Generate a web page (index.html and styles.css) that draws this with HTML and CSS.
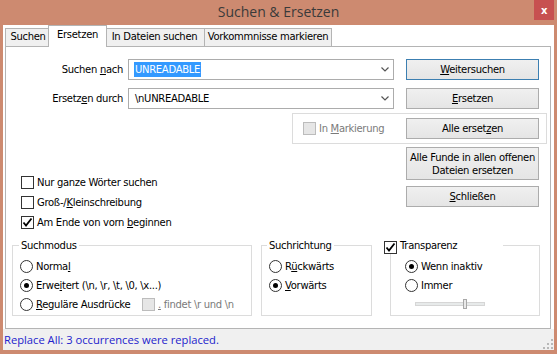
FILE: index.html
```html
<!DOCTYPE html>
<html lang="de">
<head>
    <meta charset="UTF-8">
    <title>Suchen &amp; Ersetzen</title>
    <link rel="stylesheet" href="styles.css">
</head>
<body>
    <div class="window">
        <div class="titlebar">
            <span class="title">Suchen &amp; Ersetzen</span>
            <span class="close">x</span>
        </div>
        <div class="client">
            <div class="tabs">
                <div class="tab tab-1">Suchen</div>
                <div class="tab tab-2 active">Ersetzen</div>
                <div class="tab tab-3">In Dateien suchen</div>
                <div class="tab tab-4">Vorkommnisse markieren</div>
            </div>
            <div class="panel">
                <div class="row row-find">
                    <label class="field-label">Suchen <u>n</u>ach</label>
                    <div class="combo">
                        <span class="sel">UNREADABLE</span>
                        <svg class="chevron" width="8" height="5" viewBox="0 0 8 5"><polyline points="0.5,0.5 4,4 7.5,0.5" fill="none" stroke="#555" stroke-width="1.2"/></svg>
                    </div>
                    <button class="btn default"><u>W</u>eitersuchen</button>
                </div>
                <div class="row row-replace">
                    <label class="field-label">Ersetz<u>e</u>n durch</label>
                    <div class="combo">
                        <span class="val">\nUNREADABLE</span>
                        <svg class="chevron" width="8" height="5" viewBox="0 0 8 5"><polyline points="0.5,0.5 4,4 7.5,0.5" fill="none" stroke="#555" stroke-width="1.2"/></svg>
                    </div>
                    <button class="btn"><u>E</u>rsetzen</button>
                </div>
                <div class="sel-group">
                    <span class="opt disabled in-sel"><span class="box"></span><span>In <u>M</u>arkierung</span></span>
                    <button class="btn">Alle erset<u>z</u>en</button>
                </div>
                <div class="row-mid">
                    <div class="checks">
                        <span class="opt"><span class="box"></span><span>Nur <u>g</u>anze Wörter suchen</span></span>
                        <span class="opt"><span class="box"></span><span>Groß-/<u>K</u>leinschreibung</span></span>
                        <span class="opt"><span class="box checked"><svg width="11" height="11" viewBox="0 0 11 11"><polyline points="1.5,5.5 4,8.5 9.5,1.5" fill="none" stroke="#000" stroke-width="1.8"/></svg></span><span>Am Ende von vorn <u>b</u>eginnen</span></span>
                    </div>
                    <div class="btn-col">
                        <button class="btn tall">Alle Funde in allen offenen<br>Dateien ersetzen</button>
                        <button class="btn"><u>S</u>chließen</button>
                    </div>
                </div>
                <div class="groups">
                    <fieldset class="group mode">
                        <legend>Suchmodus</legend>
                        <span class="opt"><span class="radio"></span><span>Norma<u>l</u></span></span>
                        <span class="opt"><span class="radio on"></span><span>Erwe<u>i</u>tert (\n, \r, \t, \0, \x...)</span></span>
                        <span class="opt"><span class="regex"><span class="radio"></span><span><u>R</u>eguläre Ausdrücke</span></span><span class="opt disabled"><span class="box"></span><span><u>.</u> findet \r und \n</span></span></span>
                    </fieldset>
                    <fieldset class="group dir">
                        <legend>Suchrichtung</legend>
                        <span class="opt"><span class="radio"></span><span>R<u>ü</u>ckwärts</span></span>
                        <span class="opt"><span class="radio on"></span><span><u>V</u>orwärts</span></span>
                    </fieldset>
                    <fieldset class="group trans">
                        <legend><span class="box checked"><svg width="11" height="11" viewBox="0 0 11 11"><polyline points="1.5,5.5 4,8.5 9.5,1.5" fill="none" stroke="#000" stroke-width="1.8"/></svg></span><span>Transparenz</span></legend>
                        <span class="opt"><span class="radio on"></span><span>Wenn inaktiv</span></span>
                        <span class="opt"><span class="radio"></span><span>Immer</span></span>
                        <div class="slider"><span class="thumb"></span></div>
                    </fieldset>
                </div>
            </div>
            <div class="statusbar">
                <span class="status-text">Replace All: 3 occurrences were replaced.</span>
                <svg class="grip" width="10" height="10" viewBox="0 0 10 10" fill="#b8b8b8">
                    <rect x="8" y="0" width="2" height="2"/>
                    <rect x="4" y="4" width="2" height="2"/><rect x="8" y="4" width="2" height="2"/>
                    <rect x="0" y="8" width="2" height="2"/><rect x="4" y="8" width="2" height="2"/><rect x="8" y="8" width="2" height="2"/>
                </svg>
            </div>
        </div>
    </div>
</body>
</html>
```

FILE: styles.css
```css
* {
    box-sizing: border-box;
}

body {
    margin: 0;
    font-family: 'DejaVu Sans', sans-serif;
    font-size: 10px;
    letter-spacing: -0.3px;
    color: #000;
}

u {
    text-decoration-thickness: 1px;
    text-underline-offset: 1px;
}

.window {
    width: 557px;
    height: 354px;
    background: #cd8a70;
    padding: 0 3px 4px;
    display: flex;
    flex-direction: column;
}

.titlebar {
    height: 25px;
    flex: none;
    display: grid;
    grid-template-columns: 1fr auto 1fr;
}

.title {
    grid-column: 2;
    font-family: 'Open Sans', sans-serif;
    font-size: 14px;
    letter-spacing: 0;
    color: #3a3a3a;
    line-height: 24px;
}

.close {
    grid-column: 3;
    justify-self: end;
    width: 20px;
    height: 20px;
    background: #c75050;
    color: #fff;
    font-weight: bold;
    font-size: 10px;
    display: flex;
    align-items: center;
    justify-content: center;
}

.client {
    flex: 1;
    background: #fff;
    display: flex;
    flex-direction: column;
}

/* tabs */
.tabs {
    height: 22px;
    flex: none;
    display: flex;
    align-items: flex-end;
    padding-left: 2px;
    margin-bottom: -1px;
}

.tab {
    height: 19px;
    border: 1px solid #b4b4b4;
    border-bottom: none;
    background: #f0f0f0;
    text-align: center;
    line-height: 16px;
    margin-left: -1px;
}

.tab-1 { width: 46px; margin-left: 0; }
.tab-2 { width: 55px; }
.tab-3 { width: 101px; }
.tab-4 { width: 128px; }

.tab.active {
    position: relative;
    z-index: 1;
    height: 22px;
    width: 59px;
    margin: 0 -2px 0 -3px;
    background: #fff;
    line-height: 17px;
}

.panel {
    height: 283px;
    flex: none;
    margin: 0 3px 0 2px;
    border: 1px solid #b4b4b4;
    background: #fff;
}

/* form rows */
.row {
    display: flex;
    align-items: center;
    height: 21px;
}

.row-find {
    margin-top: 12px;
}

.row-replace {
    margin-top: 8px;
}

.field-label {
    width: 117px;
    text-align: right;
}

.combo {
    margin-left: 5px;
    width: 266px;
    height: 21px;
    border: 1px solid #acacac;
    display: flex;
    align-items: center;
    padding: 0 4px 0 5px;
}

.sel {
    background: #3399ff;
    color: #fff;
    line-height: 15px;
    padding: 0 1px;
}

.val {
    padding-left: 1px;
}

.chevron {
    margin-left: auto;
}

.btn {
    font: inherit;
    letter-spacing: inherit;
    color: #000;
    width: 133px;
    height: 21px;
    padding: 0;
    border: 1px solid #acacac;
    background: linear-gradient(#f0f0f0, #e5e5e5);
    text-align: center;
    line-height: 13px;
}

.row .btn {
    margin-left: 12px;
}

.btn.default {
    border-color: #3c7fb1;
}

.btn.tall {
    height: 33px;
}

.sel-group {
    margin: 4px 0 0 286px;
    width: 255px;
    height: 31px;
    border: 1px solid #dcdcdc;
    display: flex;
    align-items: center;
    padding-left: 10px;
}

.in-sel {
    width: 103px;
}

/* checkboxes and radios */
.opt {
    display: flex;
    align-items: center;
    white-space: nowrap;
}

.box,
.radio {
    flex: none;
    width: 13px;
    height: 13px;
    border: 1px solid #333;
    background: #fff;
    margin-right: 3px;
    display: flex;
    align-items: center;
    justify-content: center;
}

.radio {
    border-radius: 50%;
}

.radio.on::after {
    content: '';
    width: 5px;
    height: 5px;
    border-radius: 50%;
    background: #000;
}

.disabled {
    color: #7a7a7a;
}

.disabled .box {
    background: #e6e6e6;
    border-color: #bcbcbc;
}

.row-mid {
    display: flex;
}

.checks {
    width: 400px;
    padding: 28px 0 0 15px;
}

.checks .opt {
    height: 20px;
}

.btn-col {
    padding-top: 3px;
    display: flex;
    flex-direction: column;
    gap: 6px;
}

/* group boxes */
.groups {
    display: flex;
    margin-top: 7px;
    padding-left: 6px;
}

.group {
    margin: 0;
    height: 77px;
    border: 1px solid #dcdcdc;
    padding: 5px 0 0 7px;
    min-width: 0;
}

.group legend {
    height: 13px;
    line-height: 13px;
    padding: 0 2px;
    margin-left: -1px;
}

.group .opt {
    height: 19px;
}

.mode {
    width: 240px;
    padding-left: 7px;
}

.dir {
    width: 111px;
    margin-left: 9px;
    padding-left: 7px;
}

.dir legend {
    margin-left: -2px;
}

.trans {
    width: 150px;
    margin-left: 18px;
    padding-left: 14px;
}

.trans legend {
    display: flex;
    align-items: flex-start;
    width: 119px;
    padding: 0;
    margin-left: -21px;
    background: #fff;
}

.trans legend .box {
    margin-top: 2px;
}

.regex {
    display: flex;
    align-items: center;
    width: 122px;
}

.slider {
    position: relative;
    margin: 7px 0 0 10px;
    width: 70px;
    height: 4px;
    background: #e7eaea;
    border: 1px solid #d6d6d6;
}

.thumb {
    position: absolute;
    left: 47px;
    top: -4px;
    width: 4px;
    height: 10px;
    background: #e9e9e9;
    border: 1px solid #a8a8a8;
}

/* status bar */
.statusbar {
    flex: 1;
    background: #f0f0f0;
    display: flex;
    justify-content: space-between;
    align-items: flex-end;
    padding: 0 1px 1px 1px;
}

.status-text {
    align-self: center;
    font-family: 'Open Sans', sans-serif;
    font-size: 11.2px;
    letter-spacing: 0;
    color: #2222cc;
}
```
